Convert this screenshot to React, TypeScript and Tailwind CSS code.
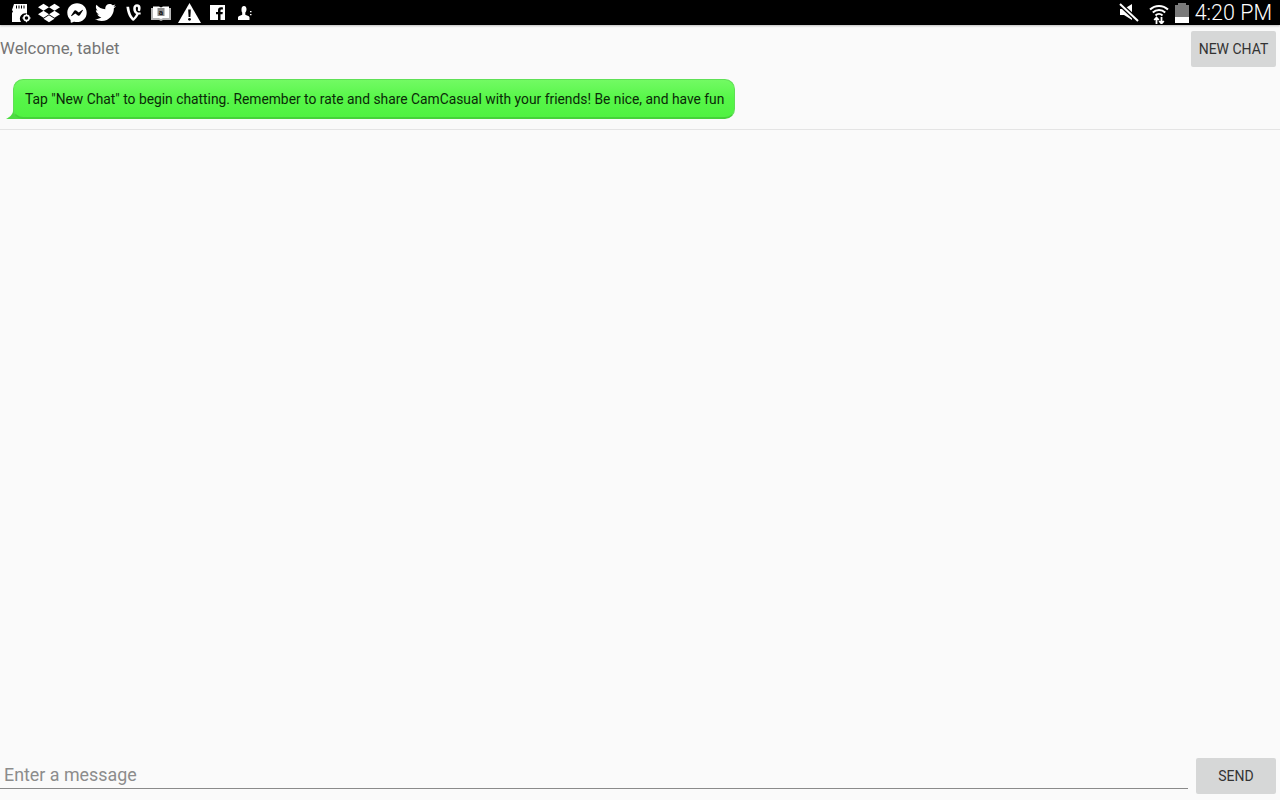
import { FaDropbox, FaFacebookMessenger, FaTwitter, FaVine } from "react-icons/fa";

const slot = "w-7 h-[25px] flex items-center justify-center shrink-0";

function SdGear() {
  return (
    <svg width="22" height="20" viewBox="0 0 22 20" fill="white">
      <path d="M4 1h13v9.500a5.500 5.500 0 0 0-6 8.500H2v-9l1-1.500L2 7z" />
      <path d="M6 2.500h1v3H6zM8.500 2.500h1v3h-1zM11 2.500h1v3h-1zM13.500 2.500h1v3h-1z" fill="black" />
      <circle cx="16.500" cy="15" r="2.600" fill="none" stroke="white" strokeWidth="1.600" />
      <path d="M16 10.800h1v2h-1zM16 17.200h1v2h-1zM12.300 14.500h2v1h-2zM18.700 14.500h2v1h-2z" />
    </svg>
  );
}

function AmazonBook() {
  return (
    <svg width="20" height="16" viewBox="0 0 20 16" fill="none">
      <path d="M0 3h9l1 1 1-1h9v12h-8l-2 1-2-1H0z" fill="#b5b5b5" />
      <path d="M2 1.500h6l2 1 2-1h6V13h-6l-2 1-2-1H2z" fill="white" />
      <rect x="6.500" y="3" width="7" height="8" fill="#8d8d8d" />
      <text x="10" y="10" textAnchor="middle" fontSize="8" fontWeight="700" fontFamily="Roboto, sans-serif" fill="#111">a</text>
    </svg>
  );
}

function Warning() {
  return (
    <svg width="23" height="20" viewBox="0 0 23 20">
      <path d="M11.500 0 23 20H0z" fill="white" />
      <path d="M10.200 6.500h2.600l-.4 7.500h-1.800z" fill="black" />
      <circle cx="11.500" cy="16.300" r="1.400" fill="black" />
    </svg>
  );
}

function FbSquare() {
  return (
    <svg width="15" height="15" viewBox="0 0 15 15">
      <path d="M0 0h15v15h-4.500V9.300h2l.3-2.300h-2.300V5.600c0-.7.200-1.100 1.100-1.100h1.300V2.400c-.3 0-1-.1-1.900-.1-1.900 0-3 1.100-3 3.100V7H6v2.300h2V15H0z" fill="white" />
    </svg>
  );
}

function PersonAdd() {
  return (
    <svg width="14" height="15" viewBox="0 0 14 15" fill="white">
      <path d="M6 1c1.800 0 2.500 1.400 2.500 3.200 0 1.400-.6 2.800-1.200 3.400v2.200c1.300.7 3.700 1.200 4.200 2.400V15H0v-2.800c.5-1.200 2.900-1.700 4.200-2.400V7.600C3.600 7 3.500 5.600 3.500 4.200 3.500 2.400 4.200 1 6 1z" />
      <path d="M12 6h1.500v1.300H12zM12 9h1.500v1.300H12z" />
    </svg>
  );
}

function Muted() {
  return (
    <svg width="20" height="19" viewBox="0 0 20 19" fill="white">
      <path d="M1 6h4l8-5v16l-8-5H1z" />
      <path d="M1.500 1.500 18.500 17.500" stroke="black" strokeWidth="4.500" />
      <path d="M1 1 19 18" stroke="white" strokeWidth="2" />
    </svg>
  );
}

function Wifi() {
  return (
    <svg width="20" height="22" viewBox="0 0 20 22" fill="none" stroke="white" strokeWidth="2">
      <path d="M1 7.500a13 13 0 0 1 18 0" />
      <path d="M3.800 10.500a9 9 0 0 1 12.400 0" />
      <path d="M6.500 13.500a5 5 0 0 1 7 0" />
      <path d="M7.500 22v-6M5.200 18l2.300-2.500L9.800 18M12.500 15v6M10.200 19l2.300 2.500 2.300-2.500" strokeWidth="1.800" />
    </svg>
  );
}

function Battery() {
  return (
    <div className="w-[14px] h-[20px] flex flex-col items-center shrink-0">
      <div className="w-[8px] h-[2px] bg-[#7a7a7a]" />
      <div className="w-[14px] h-[12px] bg-[#7a7a7a]" />
      <div className="w-[14px] h-[6px] bg-white" />
    </div>
  );
}

function StatusBar() {
  return (
    <div className="relative h-[25px] bg-black flex items-center justify-between shrink-0 pl-[7px] pr-[8px] shadow-[0_1px_2px_rgba(0,0,0,0.25)]">
      <div className="flex items-center">
        <div className={slot}><SdGear /></div>
        <div className={slot}><FaDropbox size={22} color="white" /></div>
        <div className={slot}><FaFacebookMessenger size={20} color="white" /></div>
        <div className={slot}><FaTwitter size={21} color="white" /></div>
        <div className={slot}><FaVine size={19} color="white" /></div>
        <div className={slot}><AmazonBook /></div>
        <div className={slot}><Warning /></div>
        <div className={slot}><FbSquare /></div>
        <div className={slot}><PersonAdd /></div>
      </div>
      <div className="flex items-center">
        <Muted />
        <div className="ml-[10px]"><Wifi /></div>
        <div className="ml-[6px]"><Battery /></div>
        <span className="ml-[6px] text-white text-[21.500px] leading-[25px] font-light">4:20 PM</span>
      </div>
    </div>
  );
}

function Bubble() {
  return (
    <div className="relative ml-[13px] w-[722px] h-[40px]">
      <svg className="absolute left-[-7px] bottom-0" width="20" height="14" viewBox="0 0 20 14">
        <path d="M7 0v6c0 3-3 6-7 8h20V0z" fill="#4ddc42" />
      </svg>
      <div className="relative h-full flex items-center pl-[11px] pt-[2px] rounded-[10px] border border-[#5fe055] border-b-2 border-b-[#45d23a] bg-gradient-to-b from-[#72fa63] via-[#56f648] to-[#50f242] text-[13.840px] text-[#0b2a08] whitespace-nowrap">
        Tap "New Chat" to begin chatting. Remember to rate and share CamCasual with your friends! Be nice, and have fun
      </div>
    </div>
  );
}

export default function App() {
  return (
    <div className="w-[1280px] h-[800px] flex flex-col overflow-hidden bg-[#fafafa] font-['Roboto',sans-serif]">
      <StatusBar />
      <div className="flex items-start justify-between pt-[6px] pr-[4px] h-[54px] shrink-0">
        <span className="text-[16.800px] leading-[35px] text-[#757575]">Welcome, tablet</span>
        <button className="w-[85px] h-[36px] rounded-[2px] bg-[#d6d7d7] text-[14px] text-[#333] flex items-center justify-center">
          NEW CHAT
        </button>
      </div>
      <div className="h-[51px] shrink-0 border-b border-[#e4e4e4]">
        <Bubble />
      </div>
      <div className="flex-1" />
      <div className="flex items-start pr-[4px] pb-[6px] shrink-0">
        <div className="flex-1 h-[31px] pl-[4px] border-b border-[#8a8a8a] text-[17.850px] leading-[34px] text-[#8c8c8c]">
          Enter a message
        </div>
        <button className="ml-[8px] w-[80px] h-[36px] rounded-[2px] bg-[#d6d7d7] text-[14px] text-[#333] flex items-center justify-center">
          SEND
        </button>
      </div>
    </div>
  );
}
